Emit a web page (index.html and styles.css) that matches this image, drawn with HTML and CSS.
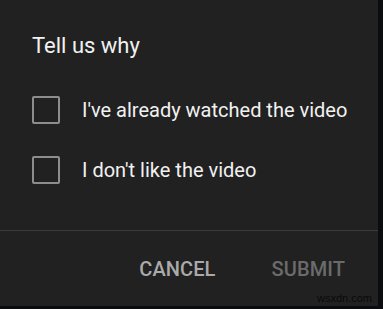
FILE: index.html
```html
<!DOCTYPE html>
<html>
<head>
<meta charset="utf-8">
<link rel="stylesheet" href="styles.css">
</head>
<body>
<div class="dialog">
  <h2 class="title">Tell us why</h2>
  <div class="options">
    <label class="option"><span class="box"></span><span class="label">I've already watched the video</span></label>
    <label class="option"><span class="box"></span><span class="label">I don't like the video</span></label>
  </div>
  <div class="divider"></div>
  <div class="actions">
    <span class="btn cancel">CANCEL</span>
    <span class="btn submit">SUBMIT</span>
  </div>
  <span class="watermark">wsxdn.com</span>
</div>
</body>
</html>
```
FILE: styles.css
```css
html, body {
  margin: 0;
  padding: 0;
}
body {
  background: #0b0c10;
  width: 383px;
  height: 309px;
  overflow: hidden;
  font-family: Roboto, "Noto Sans", Arial, sans-serif;
}
.dialog {
  position: relative;
  width: 378px;
  height: 306px;
  background: #212121;
  box-sizing: border-box;
  padding-top: 33px;
}
.title {
  margin: 0 0 0 32px;
  font-size: 22px;
  line-height: 26px;
  font-weight: 400;
  color: #f1f1f1;
}
.options {
  margin-top: 21px;
  display: flex;
  flex-direction: column;
}
.option {
  height: 60px;
  display: flex;
  align-items: center;
  padding-left: 32px;
}
.box {
  width: 24px;
  height: 24px;
  border: 2px solid #8d8d8d;
  border-radius: 2px;
  margin-top: -1px;
  flex: none;
}
.label {
  margin-left: 22px;
  font-size: 20px;
  line-height: 22px;
  font-weight: 400;
  color: #f1f1f1;
}
.divider {
  margin-top: 30px;
  height: 1px;
  background: #3c3c3c;
}
.actions {
  margin-top: 26px;
  display: flex;
  justify-content: flex-end;
  gap: 56px;
  padding-right: 33px;
}
.btn {
  font-size: 20px;
  line-height: 24px;
  font-weight: 500;
  letter-spacing: 0.1px;
}
.cancel { color: #aaaaaa; }
.submit { color: #6b6b6b; }
.watermark {
  position: absolute;
  right: 6px;
  bottom: 2px;
  font-family: "Liberation Sans", Arial, sans-serif;
  font-size: 11px;
  color: #0a0a0a;
}
```
